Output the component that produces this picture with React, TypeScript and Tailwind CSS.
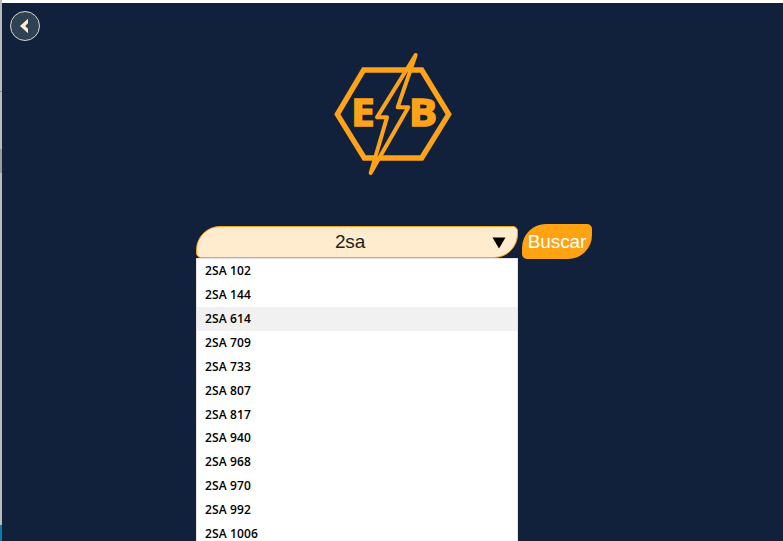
const parts = [
  "2SA 102", "2SA 144", "2SA 614", "2SA 709", "2SA 733", "2SA 807",
  "2SA 817", "2SA 940", "2SA 968", "2SA 970", "2SA 992", "2SA 1006",
];

function Logo() {
  return (
    <svg className="h-[135px] w-[135px]" viewBox="0 0 405 405" fill="none">
      <path d="M116 75H290L371 208L290 339H118L37 208Z" stroke="#fca31a" strokeWidth="16" />
      <path
        d="M272 30L156 217H186L137 384L250 187H218Z"
        fill="#12213b"
        stroke="#fca31a"
        strokeWidth="12"
        strokeLinejoin="round"
      />
      <text x="79" y="242" fill="#fca31a" stroke="#fca31a" strokeWidth="5" fontFamily="'Open Sans', sans-serif" fontWeight="700" fontSize="112" textLength="70" lengthAdjust="spacingAndGlyphs">E</text>
      <text x="252" y="242" fill="#fca31a" stroke="#fca31a" strokeWidth="5" fontFamily="'Open Sans', sans-serif" fontWeight="700" fontSize="112" textLength="84" lengthAdjust="spacingAndGlyphs">B</text>
    </svg>
  );
}

export default function App() {
  return (
    <div className="flex h-[541px] w-[783px] overflow-hidden bg-[#12213b]">
      <div className="flex w-[2px] shrink-0 flex-col">
        <div className="h-[91px] bg-[#b9bbbd]" />
        <div className="h-px bg-[#858a91]" />
        <div className="h-[57px] bg-[#b9bbbd]" />
        <div className="h-[24px] bg-[#999b9f]" />
        <div className="h-[352px] bg-[#b9bbbd]" />
        <div className="grow bg-[#087fa9]" />
      </div>
      <div className="flex min-w-0 grow flex-col">
        <div className="h-[3px] shrink-0 bg-white" />
        <header className="flex h-[42px] shrink-0 items-start pl-2 pt-2">
          <button className="flex h-[30px] w-[30px] items-center justify-center rounded-full border border-[#dcd5c8] bg-[#2f4154]">
            <svg className="h-4 w-3" viewBox="0 0 12 16" fill="none">
              <path d="M9 0.8V5.2L6.2 8L9 10.8V15.2L1 8Z" fill="#ffebcd" />
            </svg>
          </button>
        </header>
        <div className="h-[135px] shrink-0 pl-[323px]">
          <Logo />
        </div>
        <div className="mt-11 flex h-[35px] shrink-0 gap-1 pl-[194px] font-['Liberation_Sans',sans-serif]">
          <div className="mt-[2px] flex h-8 w-[322px] items-center rounded-[24px_5px_24px_5px] border border-[#f5a52a] bg-[#ffebcd] pr-[11px] text-[19px] text-[#222]">
            <span className="grow pl-[11px] text-center leading-[30px] tracking-[-0.2px]">2sa</span>
            <svg className="mt-px h-3 w-[14px]" viewBox="0 0 14 12">
              <path d="M0.5 0.5H13.5L7 11.5Z" fill="#000" />
            </svg>
          </div>
          <button className="h-[35px] w-[70px] rounded-[24px_5px_24px_5px] bg-[#ffa312] text-[19px] leading-[35px] tracking-[-0.1px] text-white">
            Buscar
          </button>
        </div>
        <ul className="-mt-px ml-[194px] w-[322px] shrink-0 border border-[#e4e2e6] bg-white font-['Open_Sans',sans-serif] text-[12px] font-semibold tracking-[0.12px] text-black">
          {parts.map((part) => (
            <li
              key={part}
              className={`h-[23.93px] pl-2 leading-[24px] ${part === "2SA 614" ? "bg-[#f1f1f1]" : ""}`}
            >
              {part}
            </li>
          ))}
        </ul>
      </div>
    </div>
  );
}
